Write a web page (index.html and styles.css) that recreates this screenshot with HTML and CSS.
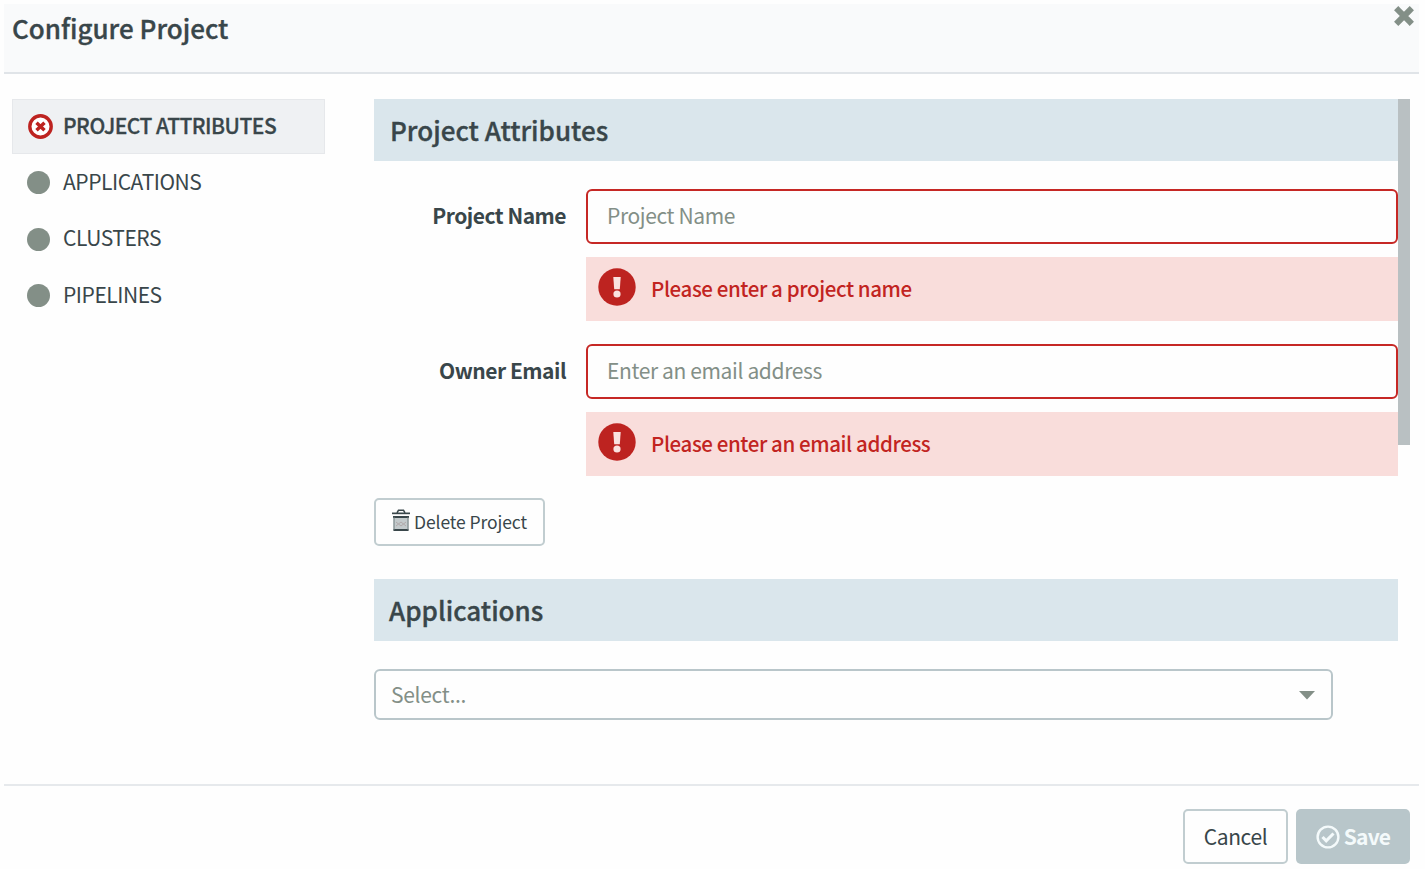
FILE: index.html
```html
<!DOCTYPE html>
<html lang="en">
<head>
<meta charset="utf-8">
<title>Configure Project</title>
<link rel="stylesheet" href="styles.css">
</head>
<body>
<div class="modal">
  <header class="modal-header">
    <h1 class="modal-title">Configure Project</h1>
    <button class="close" aria-label="Close"><svg width="20" height="20" viewBox="0 0 20 20"><path d="M4.300 4.300L15.700 15.700M15.700 4.300L4.300 15.700" stroke="#838f87" stroke-width="6" stroke-linecap="square" stroke-linejoin="round"/></svg></button>
  </header>
  <div class="modal-body">
    <nav class="steps">
      <a class="step active"><svg class="step-icon" width="25" height="25" viewBox="0 0 25 25"><circle cx="12.500" cy="12.500" r="10.700" fill="#fff" stroke="#bd2320" stroke-width="3.400"/><path d="M8.500 8.800l8 7.400M16.500 8.800l-8 7.400" stroke="#bd2320" stroke-width="3.500"/></svg><span class="step-label">PROJECT ATTRIBUTES</span></a>
      <a class="step"><i class="dot"></i><span class="step-label">APPLICATIONS</span></a>
      <a class="step"><i class="dot"></i><span class="step-label">CLUSTERS</span></a>
      <a class="step"><i class="dot"></i><span class="step-label">PIPELINES</span></a>
    </nav>
    <main class="content">
      <h2 class="section-title">Project Attributes</h2>
      <div class="field">
        <label class="field-label">Project Name</label>
        <div class="field-main">
          <div class="input"><span>Project Name</span></div>
          <div class="error"><svg class="error-icon" width="38" height="38" viewBox="0 0 38 38"><circle cx="19" cy="19" r="18.700" fill="#bd2320"/><path d="M15.300 9h7.400l-.9 12.300h-5.600z" fill="#fae2e0"/><circle cx="19" cy="26" r="3.600" fill="#fae2e0"/></svg><span>Please enter a project name</span></div>
        </div>
      </div>
      <div class="field">
        <label class="field-label">Owner Email</label>
        <div class="field-main">
          <div class="input"><span>Enter an email address</span></div>
          <div class="error"><svg class="error-icon" width="38" height="38" viewBox="0 0 38 38"><circle cx="19" cy="19" r="18.700" fill="#bd2320"/><path d="M15.300 9h7.400l-.9 12.300h-5.600z" fill="#fae2e0"/><circle cx="19" cy="26" r="3.600" fill="#fae2e0"/></svg><span>Please enter an email address</span></div>
        </div>
      </div>
      <button class="button delete"><svg class="trash" width="18" height="22" viewBox="0 0 18 22"><path d="M5 3.800L6.500 1.200h5L13 3.800" fill="none" stroke="#39464a" stroke-width="1.600"/><path d="M0 3.500h18v1.700H0z" fill="#39464a"/><path d="M1.500 7h15v15h-15z" fill="#c3cacc"/><path d="M1 7h16v2H1zM1.500 20h15v2h-15z" fill="#39464a"/><path d="M2 8v13M16 8v13" stroke="#6f7c7f"/><path d="M4 13l2.500 2 2.500-2 2.500 2 2.500-2M4 17l2.500-2 2.500 2 2.500-2 2.500 2" fill="none" stroke="#b1a9aa"/></svg><span>Delete Project</span></button>
      <h2 class="section-title apps-title">Applications</h2>
      <div class="select"><span>Select...</span><svg class="caret" width="16" height="9" viewBox="0 0 16 9"><path d="M0 0h16L8 8.500z" fill="#838f87"/></svg></div>
    </main>
    <div class="scroll-thumb"></div>
  </div>
  <footer class="modal-footer">
    <button class="button cancel"><span>Cancel</span></button>
    <button class="button save"><svg width="24" height="24" viewBox="0 0 24 24" fill="none" stroke="#f4fafb"><circle cx="12" cy="12" r="10.400" stroke-width="2.400"/><path d="M6.500 12l3.700 3.900 7.300-7.400" stroke-width="3"/></svg><span>Save</span></button>
  </footer>
</div>
</body>
</html>
```
FILE: styles.css
```css
* { box-sizing: border-box; }
body {
  margin: 0;
  background: #fefefe;
  color: #39464a;
  font: 21px/30px "Noto Sans CJK SC", "Noto Sans", sans-serif;
  letter-spacing: -0.4px;
}
h1, h2 { margin: 0; font-weight: 500; letter-spacing: 0; -webkit-text-stroke: 0.35px; }
button { font: inherit; letter-spacing: inherit; color: inherit; padding: 0; border: 0; background: none; }
svg { display: block; flex: none; }
span, label { white-space: nowrap; }
.modal { width: 1425px; height: 869px; padding: 4px 6px 0 4px; display: flex; flex-direction: column; overflow: hidden; }
.modal-header {
  height: 70px;
  flex: none;
  display: flex;
  justify-content: space-between;
  align-items: flex-start;
  padding: 5px 5px 0 8px;
  background: #f9fafb;
  border-bottom: 2px solid #e0e4e8;
}
.modal-title { margin-top: -1px; font-size: 26px; line-height: 40px; }
.close { margin-top: -3px; }
.modal-body { height: 710px; flex: none; display: flex; padding: 25px 9px 0 8px; }
.steps { width: 313px; margin-right: 49px; display: flex; flex: none; flex-direction: column; gap: 1.4px; }
.step { height: 55px; display: flex; align-items: center; padding-left: 15px; letter-spacing: -0.45px; }
.step.active { background: #eff1f3; border: 1px solid #e6e8eb; padding-left: 15px; font-weight: 500; letter-spacing: -0.5px; -webkit-text-stroke: 0.3px; }
.step-label { margin-top: -4px; }
.step-icon { margin-right: 10px; }
.dot { width: 23px; height: 23px; margin-right: 13px; border-radius: 50%; background: #838f87; }
.content { width: 1024px; flex: none; }
.section-title { height: 62px; padding-left: 16px; background: #dae6ec; font-size: 26px; line-height: 61px; }
.field { display: flex; margin-top: 28px; }
.field + .field { margin-top: 23px; }
.field-label { width: 193px; margin-right: 19px; padding-right: 1px; text-align: right; line-height: 53px; font-weight: 700; letter-spacing: -0.5px; }
.field-main { width: 812px; }
.input { height: 55px; padding-left: 19px; border: 2px solid #c62825; border-radius: 6px; line-height: 49px; color: #838f87; letter-spacing: -0.37px; }
.error { height: 64px; margin-top: 13px; display: flex; align-items: center; padding-left: 12px; background: #f9dddb; color: #c22421; font-size: 20.5px; font-weight: 500; letter-spacing: -0.4px; }
.error span { margin-top: -3px; }
.error-icon { margin: -4px 15px 0 0; }
.button { display: flex; align-items: center; border: 2px solid #c1cdd0; border-radius: 5px; }
.button span { margin-top: -2px; }
.delete { width: 171px; height: 48px; margin-top: 22px; padding-left: 16px; font-size: 17.5px; letter-spacing: -0.1px; }
.delete span { margin-top: 0; }
.trash { margin: -4px 4px 0 0; }
.apps-title { padding-left: 15px; margin-top: 33px; }
.select { width: 959px; height: 51px; margin-top: 28px; display: flex; align-items: center; justify-content: space-between; padding: 0 16px 0 15px; border: 2px solid #b9c6ca; border-radius: 6px; color: #838f87; letter-spacing: -0.3px; }
.select span { margin-top: -1px; }
.caret { margin-top: 2px; }
.scroll-thumb { width: 12px; flex: none; height: 346px; background: #b9c0c2; }
.modal-footer { flex: 1; display: flex; justify-content: flex-end; gap: 8px; padding: 23px 9px 0 0; border-top: 2px solid #e6e9ec; }
.cancel { width: 105px; height: 55px; justify-content: center; }
.save { width: 114px; height: 55px; border: 0; justify-content: center; gap: 4px; background: #b8c6ca; color: #f4fafb; font-weight: 700; letter-spacing: -0.8px; }
```
